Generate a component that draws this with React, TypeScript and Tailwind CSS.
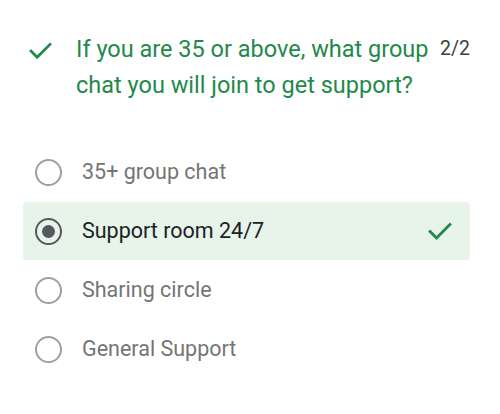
import React, { useState } from "react";

const options = ["35+ group chat", "Support room 24/7", "Sharing circle", "General Support"];

function CheckIcon({ className }: { className?: string }) {
  return (
    <svg viewBox="0 0 24 24" className={className} fill="none" stroke="currentColor" strokeWidth="2.4" strokeLinecap="square">
      <path d="M3.5 12.5l5.5 5.5L20.5 6.5" />
    </svg>
  );
}

function Radio({ checked }: { checked: boolean }) {
  return (
    <div
      className={`flex h-[27px] w-[27px] shrink-0 items-center justify-center rounded-full border-2 ${
        checked ? "border-[#55585d]" : "border-[#9aa0a6]"
      }`}
    >
      {checked && <div className="h-[13px] w-[13px] rounded-full bg-[#55585d]" />}
    </div>
  );
}

export default function App() {
  const [selected, setSelected] = useState("Support room 24/7");

  return (
    <div className="h-[414px] w-[500px] bg-white font-['Roboto',sans-serif]">
      <div className="flex pl-[27px] pr-[30px] pt-[31px]">
        <CheckIcon className="mt-[6px] h-[27px] w-[27px] shrink-0 text-[#22894a]" />
        <div className="ml-[22px] w-[362px] text-[23.5px] leading-[36px] text-[#22894a]">
          If you are 35 or above, what group chat you will join to get support?
        </div>
        <div className="ml-auto text-[19.5px] leading-[36px] text-[#3c4043]">2/2</div>
      </div>

      <div className="mt-[40px] flex flex-col px-[23px]">
        {options.map((opt) => {
          const checked = opt === selected;
          return (
            <button
              key={opt}
              onClick={() => setSelected(opt)}
              className={`flex h-[58px] w-[447px] items-center rounded-[4px] pl-[12px] pr-[16px] text-left ${
                checked ? "bg-[#e6f4ea]" : ""
              } ${opt === options[0] ? "" : "mt-[1px]"}`}
            >
              <Radio checked={checked} />
              <span className={`ml-[20px] text-[21.5px] ${checked ? "text-[#202124]" : "text-[#757575]"}`}>{opt}</span>
              {checked && <CheckIcon className="ml-auto h-[28px] w-[28px] text-[#22894a]" />}
            </button>
          );
        })}
      </div>
    </div>
  );
}
